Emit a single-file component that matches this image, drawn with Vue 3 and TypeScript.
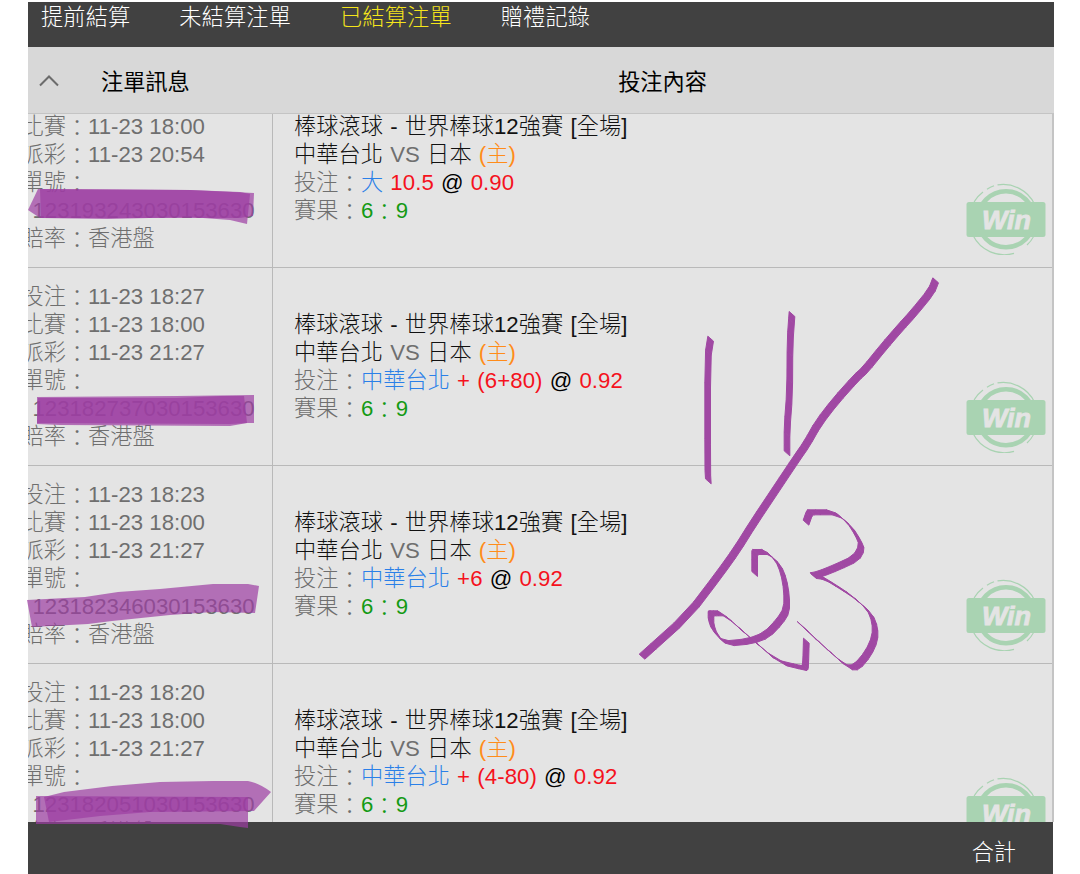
<template>
  <div class="page">
    <nav class="tabs">
      <a
        v-for="tab in tabs"
        :key="tab.id"
        :class="['tab', { active: tab.id === activeTab }]"
        @click="activeTab = tab.id"
      >{{ tab.label }}</a>
    </nav>

    <header class="table-head">
      <div class="head-info">
        <svg class="chevron" width="20" height="12" viewBox="0 0 20 12">
          <path d="M1 10.5 L10 1.5 L19 10.5" fill="none" stroke="#6c6c6c" stroke-width="2" />
        </svg>
        <span>注單訊息</span>
      </div>
      <div class="head-content">投注內容</div>
    </header>

    <main class="table-body">
      <div class="rows">
        <section v-for="bet in bets" :key="bet.no" class="row">
          <div class="info">
            <div>投注<i>：</i>{{ bet.placed }}</div>
            <div>比賽<i>：</i>{{ bet.match }}</div>
            <div>派彩<i>：</i>{{ bet.paid }}</div>
            <div>單號<i>：</i></div>
            <div class="number">{{ bet.no }}</div>
            <div>賠率<i>：</i>香港盤</div>
          </div>
          <div class="content">
            <div class="dark">棒球滾球 - 世界棒球12強賽 [全場]</div>
            <div>
              <span class="dark">中華台北</span> VS <span class="dark">日本</span>
              {{ ' ' }}<span class="host">(主)</span>
            </div>
            <div>
              投注<i>：</i><span class="pick">{{ bet.pick }}</span>{{ ' ' }}
              <span class="red">{{ bet.line }}</span>{{ ' ' }}
              <span class="at">@</span>{{ ' ' }}
              <span class="red">{{ bet.odds }}</span>
            </div>
            <div>賽果<i>：</i><span class="score">6<i>：</i>9</span></div>
            <svg class="win" width="80" height="72" viewBox="0 0 80 72">
              <g fill="none" stroke="#a9d3b2">
                <path d="M31.5 1.9 A35 35 0 0 1 61 62" stroke-width="1.2" />
                <path d="M21 6.2 A35 35 0 0 1 28 2.8" stroke-width="1.2" />
                <path d="M17 9 A35 35 0 0 0 48 70.4" stroke-width="1.2" />
                <circle cx="40" cy="36.3" r="28" stroke-width="4.6" />
              </g>
              <rect x="0.5" y="19" width="79" height="35" rx="2.5" fill="#a9d3b2" />
              <text x="16" y="46" textLength="49" lengthAdjust="spacingAndGlyphs">Win</text>
            </svg>
          </div>
        </section>
      </div>
    </main>

    <footer class="total">合計</footer>

    <svg class="ink" width="1080" height="874" viewBox="0 0 1080 874">
      <g class="marker">
        <path v-for="(d, i) in markers" :key="i" :d="d" />
      </g>
      <g class="pen" transform="translate(620 270) scale(0.33333)">
        <polygon v-for="(points, i) in penShapes" :key="i" :points="points" />
      </g>
    </svg>
  </div>
</template>

<script setup lang="ts">
import { computed, ref } from 'vue'

interface Bet {
  placed: string
  match: string
  paid: string
  no: string
  pick: string
  line: string
  odds: string
}

type Point = [number, number]

const tabs = [
  { id: 'early', label: '提前結算' },
  { id: 'open', label: '未結算注單' },
  { id: 'settled', label: '已結算注單' },
  { id: 'gift', label: '贈禮記錄' },
]
const activeTab = ref('settled')

const bets: Bet[] = [
  { placed: '11-23 18:30', match: '11-23 18:00', paid: '11-23 20:54', no: '123193243030153630', pick: '大', line: '10.5', odds: '0.90' },
  { placed: '11-23 18:27', match: '11-23 18:00', paid: '11-23 21:27', no: '123182737030153630', pick: '中華台北', line: '+ (6+80)', odds: '0.92' },
  { placed: '11-23 18:23', match: '11-23 18:00', paid: '11-23 21:27', no: '123182346030153630', pick: '中華台北', line: '+6', odds: '0.92' },
  { placed: '11-23 18:20', match: '11-23 18:00', paid: '11-23 21:27', no: '123182051030153630', pick: '中華台北', line: '+ (4-80)', odds: '0.92' },
]

// highlighter passes, overlapping ones get darker
const markers = [
  'M28 210 L38 189 L190 190 L254 193 L253 216 L240 218 L190 218 L40 218 Z',
  'M40 189 L190 190 L240 192 L250 194 L247 224 L230 220 L190 217 L108 219 L41 218 Z',
  'M37 397 L177 396 L254 395 L254 423 L247 423 L230 426 L60 425 L37 424 Z',
  'M38 398 L177 398 L221 396 L244 396 L247 423 L230 424 L37 423 Z',
  'M27 600 L85 597 L118 592 L160 589 L213 584 L248 584 L259 586 L255 613 L213 612 L170 615 L112 621 L88 624 L32 627 Z',
  'M36 796 L240 797 L248 797 L248 828 L240 827 L220 824 L36 824 Z',
  'M44 797 L64 792 L112 786 L160 782 L213 781 L248 781 Q259 783 271 792 L254 811 L150 812 L100 816 L49 822 Z',
]

const strokes: Point[][] = [
  [[272, 206], [263, 262], [263, 600], [265, 634]],
  [[516, 132], [510, 215], [509, 370], [501, 475], [501, 550]],
  [[947, 31], [934, 64], [880, 130], [840, 174], [790, 232], [735, 300], [710, 322], [645, 395], [595, 460], [560, 522], [530, 565], [470, 655], [400, 760], [350, 840], [300, 910], [205, 1035], [66, 1160]],
  [[404, 912], [404, 866], [404, 846], [414, 846], [440, 846], [475, 879], [491, 918], [500, 970], [500, 1020], [480, 1053], [440, 1095], [390, 1114], [315, 1121], [283, 1085], [273, 1055], [273, 1037], [273, 1030], [282, 1030], [308, 1030], [385, 1098], [475, 1176], [545, 1193], [555, 1194], [557, 1180], [559, 1112]],
  [[558, 758], [569, 727], [577, 727], [645, 727], [690, 765], [715, 805], [726, 832], [708, 865], [650, 892], [600, 912], [573, 917], [605, 921], [650, 948], [700, 981], [750, 1026], [765, 1065], [765, 1105], [745, 1150], [710, 1192], [683, 1192], [610, 1128], [540, 1062]],
]

// one corner-cutting pass, end points stay put
function smooth(stroke: Point[]): Point[] {
  const result: Point[] = [stroke[0]]
  for (let i = 0; i < stroke.length - 1; i++) {
    const [x1, y1] = stroke[i]
    const [x2, y2] = stroke[i + 1]
    result.push([x1 * 0.75 + x2 * 0.25, y1 * 0.75 + y2 * 0.25])
    result.push([x1 * 0.25 + x2 * 0.75, y1 * 0.25 + y2 * 0.75])
  }
  result.push(stroke[stroke.length - 1])
  return result
}

// sweep a flat slanted nib along every segment
const nib: Point = [8.5, 7.5]
const penShapes = computed(() =>
  strokes.map(smooth).flatMap((stroke) =>
    stroke.slice(1).map(([x2, y2], i) => {
      const [x1, y1] = stroke[i]
      const [nx, ny] = nib
      return `${x1 - nx},${y1 - ny} ${x2 - nx},${y2 - ny} ${x2 + nx},${y2 + ny} ${x1 + nx},${y1 + ny}`
    })
  )
)
</script>

<style>
body {
  margin: 0;
  background: #fff;
}
</style>

<style scoped>
.page {
  position: relative;
  display: grid;
  grid-template-rows: 45px 67px 707.5px 52.5px;
  box-sizing: border-box;
  width: 1080px;
  height: 874px;
  padding: 2px 26px 0 28px;
  overflow: hidden;
  background: #fff;
  font-family: "Liberation Sans", "Noto Sans CJK TC", sans-serif;
  font-size: 22.2px;
  font-weight: 300;
  line-height: 28.1px;
}

/* full-width colons sit a little below the middle */
i {
  font-style: normal;
  line-height: 0;
  vertical-align: -2px;
}

.tabs {
  display: flex;
  gap: 49px;
  padding: 2px 0 0 13px;
  background: #414141;
  color: #fff;
  letter-spacing: 0.15px;
}

.tab {
  cursor: pointer;
}

.tab.active {
  color: #f5e51b;
}

.table-head {
  display: grid;
  grid-template-columns: 245px 1fr;
  align-items: center;
  box-sizing: border-box;
  padding-top: 6px;
  border-bottom: 1px solid #c4c4c4;
  background: #d8d8d8;
  color: #000;
  font-weight: 400;
}

.head-info {
  display: flex;
  align-items: center;
  gap: 42px;
  padding-left: 11px;
}

.chevron {
  margin-top: -5px;
}

.head-content {
  padding-right: 2px;
  text-align: center;
}

.table-body {
  overflow: hidden;
  border-right: 2px solid #c4c4c4;
  background: #e4e4e4;
}

.rows {
  margin-top: -44px;
}

.row {
  display: grid;
  grid-template-columns: 245px 1fr;
  box-sizing: border-box;
  height: 198px;
  border-bottom: 1px solid #b9b9b9;
  color: #6f6f6f;
  white-space: nowrap;
}

.info {
  box-sizing: border-box;
  padding-top: 15px;
  border-right: 1px solid #b9b9b9;
  text-indent: -6.5px;
}

.number {
  text-indent: 4.5px;
}

.content {
  position: relative;
  display: flex;
  flex-direction: column;
  justify-content: center;
  padding: 1px 0 0 21px;
  letter-spacing: 0.1px;
  word-spacing: 0.8px;
}

.dark {
  color: #111;
}

.host {
  color: #ff8c1a;
}

.pick {
  color: #2b80e8;
}

.red {
  color: #f5121d;
}

.at {
  color: #000;
}

.score {
  color: #149a14;
}

.win {
  position: absolute;
  right: 6px;
  bottom: 12px;
  letter-spacing: 0;
}

.win text {
  fill: #e4e4e4;
  stroke: #e4e4e4;
  stroke-width: 0.9px;
  font-family: "Liberation Sans", sans-serif;
  font-size: 26px;
  font-style: italic;
  font-weight: 700;
}

.total {
  box-sizing: border-box;
  margin-right: 1px;
  padding: 17px 37px 0 0;
  background: #414141;
  color: #fff;
  text-align: right;
}

.ink {
  position: absolute;
  top: 0;
  left: 0;
  pointer-events: none;
}

.marker {
  fill: rgba(157, 61, 163, 0.7);
}

.pen {
  fill: #a048a3;
  stroke: #a048a3;
  stroke-width: 3px;
  stroke-linejoin: round;
}
</style>
